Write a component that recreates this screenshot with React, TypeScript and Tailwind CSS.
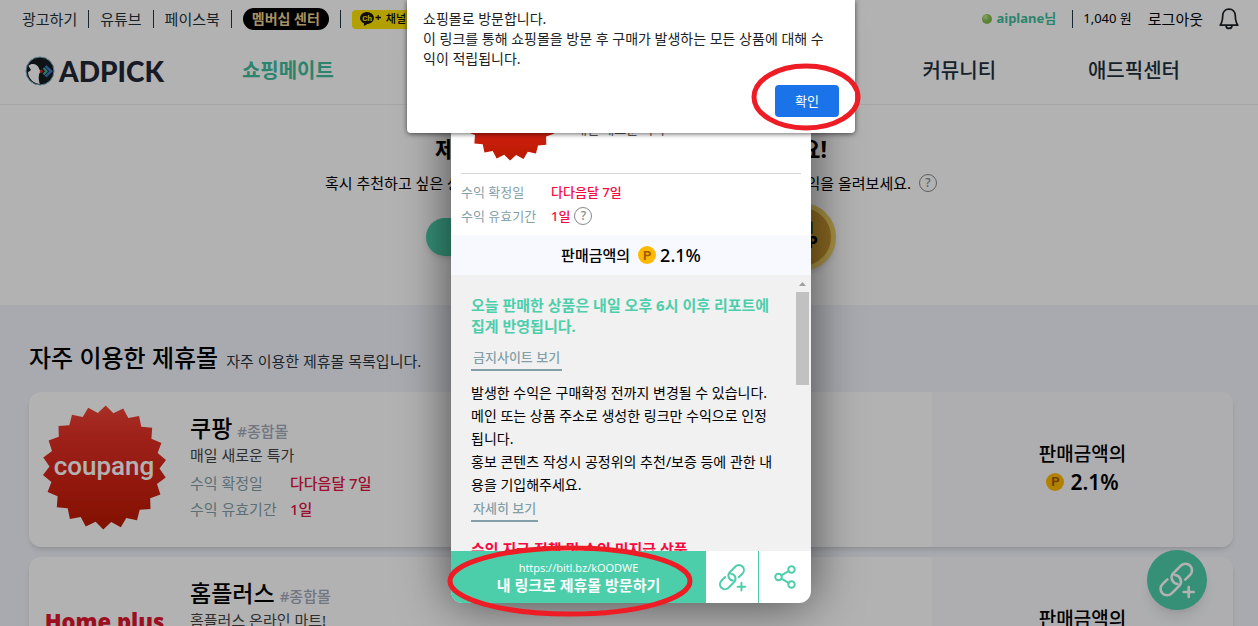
import { Share2 } from "lucide-react";
import React from "react";

const topLinks = ["광고하기", "유튜브", "페이스북"];

const menus = [
  "쇼핑메이트",
  "수익링크",
  "인플루언",
  "이용안내",
  "커뮤니티",
  "애드픽센터",
];

const malls = [
  {
    name: "쿠팡",
    tag: "#종합몰",
    desc: "매일 새로운 특가",
    logo: "coupang",
    confirm: "다다음달 7일",
    valid: "1일",
    rate: "2.1%",
  },
  {
    name: "홈플러스",
    tag: "#종합몰",
    desc: "홈플러스 온라인 마트!",
    logo: "homeplus",
    confirm: "다다음달 7일",
    valid: "1일",
    rate: "2.1%",
  },
];

// 22 spikes around the red seal
const sealPoints = Array.from({ length: 44 }, (_, i) => {
  const r = i % 2 === 0 ? 62 : 55;
  const a = (i / 44) * Math.PI * 2 - Math.PI / 2 + 0.02;
  return `${(62.5 + r * Math.cos(a)).toFixed(1)},${(62.5 + r * Math.sin(a)).toFixed(1)}`;
}).join(" ");

const CoupangLogo = ({ className, id }: { className: string; id: string }) => (
  <svg viewBox="0 0 125 125" className={className} role="img" aria-label="coupang">
    <defs>
      <linearGradient id={id} x1="0" y1="0" x2="0" y2="1">
        <stop offset="0" stopColor="#f04437" />
        <stop offset="0.25" stopColor="#e33025" />
        <stop offset="0.7" stopColor="#cd2010" />
        <stop offset="1" stopColor="#b91a00" />
      </linearGradient>
    </defs>
    <polygon points={sealPoints} fill={`url(#${id})`} />
    <text
      x="62"
      y="70"
      textAnchor="middle"
      fontFamily="Roboto, sans-serif"
      fontSize="26"
      fontWeight="500"
      fill="#fff"
    >
      coupang
    </text>
  </svg>
);

const LinkPlus = ({ className }: { className: string }) => (
  <svg
    viewBox="0 0 38 38"
    className={className}
    fill="none"
    stroke="currentColor"
    strokeWidth="2.6"
    strokeLinecap="round"
    aria-hidden="true"
  >
    <path d="M27.2 18.7 L32.1 13.8 A6.5 6.5 0 0 0 22.9 4.6 L15.4 12.1 A6.5 6.5 0 0 0 19.5 23" />
    <path d="M9.4 18.3 L4.5 23.2 A6.5 6.5 0 0 0 13.7 32.4 L21.2 24.9 A6.5 6.5 0 0 0 17.1 14" />
    <path d="M30.7 26 V36 M25.7 31 H35.7" />
  </svg>
);

const BirdMark = () => (
  <svg viewBox="0 0 30 30" className="h-[30px] w-[30px]" aria-hidden="true">
    <circle cx="15" cy="15" r="14" fill="#151d20" stroke="#7fb4c6" strokeWidth="1" />
    <path
      d="M3.4 9.8 C5 8.4 6.6 7.8 8.4 8 C11.5 8.3 13.8 10.5 14.2 13.3 L16.5 15.6 L14.5 17 C13.4 20 13.4 24 14.8 28 C8 27.4 3.6 22.4 3 16.5 C3.6 15.6 5.4 14.8 6 14 C5 12.6 4 11.2 3.4 9.8 Z"
      fill="#fff"
    />
    <circle cx="16.4" cy="15.2" r="1.5" fill="#e02030" />
    <path d="M18.5 12 L21.5 15.2 L18.5 18.4" fill="none" stroke="#3fb08f" strokeWidth="2.2" />
    <path d="M20.5 10 L26 15.2 L20.5 20.6" fill="none" stroke="#3f74c6" strokeWidth="2.6" />
  </svg>
);

const BellIcon = () => (
  <svg
    viewBox="0 0 20 22"
    className="h-[22px] w-5"
    fill="none"
    stroke="currentColor"
    strokeWidth="1.7"
    strokeLinejoin="round"
    strokeLinecap="round"
    aria-hidden="true"
  >
    <path d="M10 1.2 C6 1.2 3.8 4.2 3.7 7.8 C3.6 12.5 3.2 14.5 1.2 17.2 H18.8 C16.8 14.5 16.4 12.5 16.3 7.8 C16.2 4.2 14 1.2 10 1.2 Z" />
    <path d="M7 17.6 C7.2 21.4 12.8 21.4 13 17.6" />
  </svg>
);

const HelpButton = () => (
  <button
    aria-label="도움말"
    className="flex h-[18px] w-[18px] items-center justify-center rounded-full border border-[#888] text-xs leading-none font-medium text-[#888]"
  >
    ?
  </button>
);

const Point = () => (
  <span className="flex h-[18px] w-[18px] shrink-0 items-center justify-center rounded-full bg-[#ffb900] font-['Roboto',sans-serif] text-[13px] leading-none font-bold text-[#a35c00]">
    P
  </span>
);

const Bar = () => <span className="h-[18px] w-px bg-[#223642]" />;

const Header = () => {
  return (
    <header className="border-b border-[#eee] bg-white">
      {/* Top bar */}
      <div className="flex h-[38px] items-center justify-between pr-[19px] pl-[22px] text-[15px] text-[#22323c]">
        <div className="flex items-center gap-[11px] whitespace-nowrap">
          {topLinks.map((link) => (
            <React.Fragment key={link}>
              <a href="#">{link}</a>
              <Bar />
            </React.Fragment>
          ))}
          <a
            href="#"
            className="flex h-[22px] items-center rounded-full bg-black px-[9px] text-sm font-bold text-[#eed093]"
          >
            멤버십 센터
          </a>
          <Bar />
          <a
            href="#"
            className="flex h-[19px] items-center gap-1 rounded-sm bg-[#ffe600] px-2 text-[11px] font-medium text-black"
          >
            <svg viewBox="0 0 22 14" className="h-[14px] w-[22px]" aria-hidden="true">
              <ellipse cx="7" cy="6" rx="7" ry="6" fill="#1b1400" />
              <path d="M4 10 L4 14 L9 11 Z" fill="#1b1400" />
              <text
                x="7"
                y="9"
                textAnchor="middle"
                fontFamily="Roboto, sans-serif"
                fontSize="8"
                fontWeight="700"
                fill="#ffe600"
              >
                Ch
              </text>
              <path d="M15.5 5.5 H21 M18.2 3 V8" stroke="#1b1400" strokeWidth="1.3" />
            </svg>
            채널 추가
          </a>
        </div>
        <div className="flex items-center whitespace-nowrap text-black">
          <span className="mr-1 h-[10px] w-[10px] rounded-full bg-[radial-gradient(circle_at_35%_30%,#c5e88f,#86bd4e_45%)]" />
          <a href="#" className="mr-4 text-[13px] font-bold text-[#3fbd9d]">
            aiplane님
          </a>
          <Bar />
          <span className="ml-[10px] text-[13px]">1,040 원</span>
          <a href="#" className="ml-4 text-[15px]">
            로그아웃
          </a>
          <button aria-label="알림" className="ml-4 text-[#1c2226]">
            <BellIcon />
          </button>
        </div>
      </div>

      {/* Main navigation */}
      <div className="flex h-[66px] items-center pr-[78px] pl-[25px]">
        <a href="#" className="mr-[78px] flex items-center gap-1 text-[#232836]">
          <BirdMark />
          <span className="font-['Lato',sans-serif] text-[28px] leading-8 font-black">ADPICK</span>
        </a>
        <nav className="flex flex-1 justify-between text-xl font-medium whitespace-nowrap text-[#1d303c]">
          {menus.map((menu) => (
            <a
              key={menu}
              href="#"
              className={menu === "쇼핑메이트" ? "font-bold text-[#3fbd9d]" : ""}
            >
              {menu}
            </a>
          ))}
        </nav>
      </div>
    </header>
  );
};

const Hero = () => {
  return (
    <section className="flex h-[200px] flex-col items-center bg-white pt-[30px] pl-1 text-black">
      <h1 className="flex w-[392px] justify-between text-[23px] leading-7 font-bold">
        <span>제휴몰을</span>
        <span>추천해보세요!</span>
      </h1>
      <div className="mt-2 flex h-6 w-[612px] items-center text-[15px]">
        <p className="flex flex-1 justify-between">
          <span>혹시 추천하고 싶은 상품이</span>
          <span>있다면 수익을 올려보세요.</span>
        </p>
        <span className="ml-2">
          <HelpButton />
        </span>
      </div>
      <div className="mt-2 flex w-[410px] items-center justify-between">
        <button className="h-[38px] w-60 rounded-full bg-[#4dceab] font-bold text-white shadow-md">
          제휴몰 추천하기
        </button>
        <span className="flex h-[68px] w-[68px] flex-col items-center justify-center rounded-full border-[5px] border-[#eed064] bg-[#c7962f] pb-1 shadow-md">
          <span className="text-[13px] leading-[14px]">인기</span>
          <b className="text-base leading-4 font-extrabold">TOP</b>
        </span>
      </div>
    </section>
  );
};

const MallList = () => {
  return (
    <section className="bg-[#f3f4fb] pt-[35px] pr-[25px] pl-[29px]">
      <h2 className="mb-4 flex h-9 items-baseline gap-2 text-2xl leading-9 font-medium text-black">
        자주 이용한 제휴몰
        <span className="text-[15px] font-normal text-[#2c3440]">
          자주 이용한 제휴몰 목록입니다.
        </span>
      </h2>
      <div className="flex flex-col gap-[10px]">
        {malls.map((mall) => (
          <article
            key={mall.name}
            className="flex min-h-[155px] overflow-hidden rounded-xl bg-white shadow-md"
          >
            <div className="flex flex-1 gap-[23px] pl-[13px]">
              <div className="flex w-[125px] flex-col items-center justify-center pb-1">
                {mall.logo === "coupang" ? (
                  <CoupangLogo id="seal-card" className="h-[125px] w-[125px]" />
                ) : (
                  <span className="flex flex-col items-center font-['Open_Sans',sans-serif] text-[22px] leading-7 font-extrabold whitespace-nowrap text-[#e11530]">
                    Home plus
                    <span className="text-sm leading-6 font-bold">홈플러스</span>
                  </span>
                )}
              </div>
              <div className="pt-5 text-[15px]">
                <h3 className="flex h-8 items-baseline gap-[5px] text-[23px] leading-8 font-medium text-black">
                  {mall.name}
                  <span className="text-[15px] font-medium text-[#a2a9bb]">{mall.tag}</span>
                </h3>
                <p className="leading-[22px] text-[#444]">{mall.desc}</p>
                <dl className="mt-1 grid grid-cols-[100px_auto] leading-[26px]">
                  <dt className="text-[#849fa8]">수익 확정일</dt>
                  <dd className="font-medium text-[#e11545]">{mall.confirm}</dd>
                  <dt className="text-[#849fa8]">수익 유효기간</dt>
                  <dd className="font-medium text-[#e11545]">{mall.valid}</dd>
                </dl>
              </div>
            </div>
            <div className="flex w-1/4 flex-col items-center justify-center bg-[#f9fafd] pb-1 leading-7 font-medium text-black">
              <p className="text-[19px] leading-7">판매금액의</p>
              <p className="flex items-center gap-[6px] text-[21px] leading-7 font-semibold">
                <Point />
                {mall.rate}
              </p>
            </div>
          </article>
        ))}
      </div>
    </section>
  );
};

const MallModal = () => {
  return (
    <div
      role="dialog"
      aria-label="쿠팡"
      className="flex h-[580px] w-[360px] flex-col overflow-hidden rounded-xl bg-white shadow-[0_0_50px_rgba(0,0,0,0.6)]"
    >
      <div className="mx-[10px] flex h-[151px] shrink-0 items-end gap-4 border-b border-[#d3d6da] pb-3 pl-[2px]">
        <CoupangLogo id="seal-modal" className="h-24 w-24" />
        <div className="pb-5">
          <h3 className="text-xl font-medium">쿠팡</h3>
          <p className="text-[13px] leading-6 text-[#555]">매일 새로운 특가</p>
        </div>
      </div>
      <dl className="grid shrink-0 grid-cols-[90px_auto] px-[10px] pt-[6px] pb-[7px] text-[13px] leading-6">
        <dt className="text-[#849fa8]">수익 확정일</dt>
        <dd className="font-medium text-[#f7093f]">다다음달 7일</dd>
        <dt className="text-[#849fa8]">수익 유효기간</dt>
        <dd className="flex items-center gap-1 font-medium text-[#f7093f]">
          1일
          <HelpButton />
        </dd>
      </dl>
      <p className="flex h-10 shrink-0 items-center justify-center bg-[#f8f9fe] text-[15px] font-medium text-black">
        판매금액의
        <span className="mr-1 ml-2">
          <Point />
        </span>
        <span className="text-lg">2.1%</span>
      </p>

      <div className="flex min-h-0 flex-1 bg-[#f1f1f1]">
        <div className="flex-1 overflow-hidden p-5 text-sm leading-[23px] break-all text-black">
          <p className="text-[15px] leading-[21px] font-bold text-[#4dceab]">
            오늘 판매한 상품은 내일 오후 6시 이후 리포트에 집계 반영됩니다.
          </p>
          <a
            href="#"
            className="mt-2 mb-[10px] inline-block border-b-2 border-[#849fa8] px-[2px] text-[13px] leading-6 font-medium text-[#849fa8]"
          >
            금지사이트 보기
          </a>
          <p>발생한 수익은 구매확정 전까지 변경될 수 있습니다.</p>
          <p>메인 또는 상품 주소로 생성한 링크만 수익으로 인정됩니다.</p>
          <p>홍보 콘텐츠 작성시 공정위의 추천/보증 등에 관한 내용을 기입해주세요.</p>
          <a
            href="#"
            className="inline-block border-b-2 border-[#849fa8] px-[2px] text-[13px] leading-6 font-medium text-[#849fa8]"
          >
            자세히 보기
          </a>
          <p className="mt-4 text-[15px] font-bold text-[#f7093f]">
            수익 지급 정책 및 수익 미지급 상품
          </p>
        </div>
        {/* Scroll track */}
        <div className="flex w-[17px] flex-col items-center" aria-hidden="true">
          <svg viewBox="0 0 15 17" className="h-[17px] w-[15px] shrink-0">
            <path d="M4 11 L7.5 7 L11 11 Z" fill="#a0a0a0" />
          </svg>
          <span className="h-[93px] w-[13px] bg-[#c1c1c1]" />
        </div>
      </div>

      <div className="flex h-[52px] shrink-0 text-[#4dceab]">
        <button className="flex flex-1 flex-col items-center justify-center bg-[#4dceab] text-white">
          <span className="font-['Open_Sans',sans-serif] text-[11px] leading-4">
            https://bitl.bz/kOODWE
          </span>
          <span className="text-[15px] leading-[18px] font-bold">내 링크로 제휴몰 방문하기</span>
        </button>
        <button aria-label="링크 추가" className="flex w-[52px] items-center justify-center">
          <LinkPlus className="h-[29px] w-[29px]" />
        </button>
        <button
          aria-label="공유"
          className="flex w-[53px] items-center justify-center border-l border-[#4dceab]"
        >
          <Share2 size={26} strokeWidth={1.8} />
        </button>
      </div>
    </div>
  );
};

const ConfirmDialog = () => {
  return (
    <div
      role="alertdialog"
      aria-label="쇼핑몰 방문"
      className="w-[448px] rounded-b bg-white px-4 pt-[9px] pb-4 text-sm leading-5 break-all text-[#202124] shadow-[0_1px_5px_rgba(0,0,0,0.6)]"
    >
      <p>쇼핑몰로 방문합니다.</p>
      <p className="pr-2">
        이 링크를 통해 쇼핑몰을 방문 후 구매가 발생하는 모든 상품에 대해 수익이 적립됩니다.
      </p>
      <div className="mt-4 flex justify-end">
        <button className="h-8 w-16 rounded bg-[#1a73e8] text-[13px] text-white">확인</button>
      </div>
    </div>
  );
};

const App = () => {
  return (
    <div className="relative h-screen overflow-hidden bg-[#f3f4fb] font-['Noto_Sans','Noto_Sans_CJK_KR',sans-serif]">
      <Header />
      <Hero />
      <MallList />
      <button
        aria-label="링크 만들기"
        className="absolute right-[51px] bottom-4 flex h-[60px] w-[60px] items-center justify-center rounded-full bg-[#4dceab] text-white shadow-lg"
      >
        <LinkPlus className="h-[38px] w-[38px]" />
      </button>

      <div className="absolute inset-0 flex items-center justify-center bg-black/30 pl-1">
        <MallModal />
      </div>
      <div className="absolute inset-x-0 top-0 flex justify-center pl-1">
        <ConfirmDialog />
      </div>

      {/* Red marker rings */}
      <div className="pointer-events-none absolute inset-0 flex justify-center pl-1">
        <svg viewBox="0 0 448 626" className="h-[626px] w-[448px] shrink-0 overflow-visible">
          <g fill="none" stroke="#ee1c24" strokeWidth="5">
            <ellipse cx="399" cy="97" rx="52" ry="31" />
            <ellipse cx="163" cy="581" rx="120" ry="33" />
          </g>
        </svg>
      </div>
    </div>
  );
};

export default App;
